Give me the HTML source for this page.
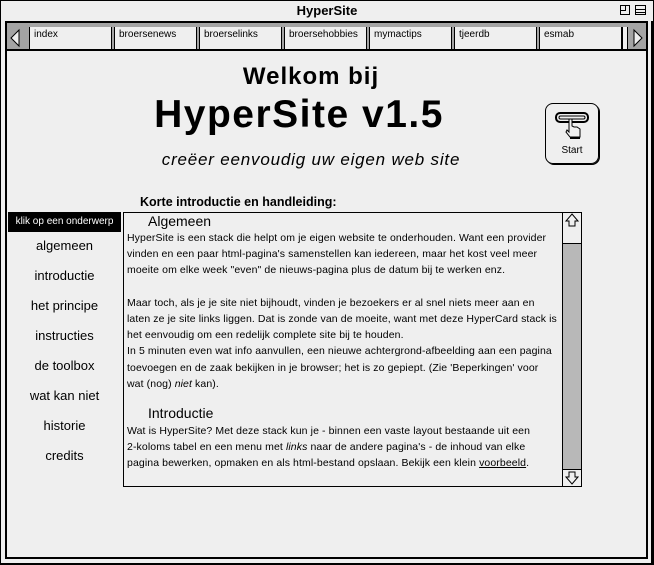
<!DOCTYPE html>
<html><head><meta charset="utf-8"><style>
*{margin:0;padding:0;box-sizing:border-box}
body{width:654px;height:565px;background:#efefef;position:relative;overflow:hidden;font-family:"Liberation Sans",sans-serif;color:#000}
.a{position:absolute}
.chk{background:#a4a4a4}
.tab{position:absolute;top:27px;height:22px;background:#efefef;border-left:1px solid #000;border-right:1px solid #000;font-size:10px;padding:2px 0 0 4px}
.menu{position:absolute;left:8px;width:113px;text-align:center;font-size:13px}
.ln{white-space:nowrap;font-size:10.5px;height:16.2px;line-height:16px;letter-spacing:0.1px}
</style></head><body>
<div class="a" style="left:0;top:0;width:654px;height:565px;border:1px solid #000"></div>
<div class="a" style="left:0;top:3px;width:654px;text-align:center;font-weight:bold;font-size:13px">HyperSite</div>
<div class="a" style="left:620px;top:5px;width:10px;height:10px;border:1px solid #000"></div>
<div class="a" style="left:620px;top:5px;width:6px;height:6px;border-right:1px solid #000;border-bottom:1px solid #000"></div>
<div class="a" style="left:635px;top:5px;width:11px;height:10px;border:1px solid #000;background:linear-gradient(#000,#000) 0 3px/100% 1px no-repeat,linear-gradient(#000,#000) 0 6px/100% 1px no-repeat"></div>
<div class="a" style="left:5px;top:21px;width:643px;height:538px;border:2px solid #000"></div>
<div class="a" style="left:651px;top:21px;width:2px;height:543px;background:#000"></div>
<div class="a" style="left:0;top:563px;width:654px;height:2px;background:#000"></div>
<div class="a chk" style="left:7px;top:23px;width:639px;height:26px"></div>
<div class="a" style="left:7px;top:49px;width:639px;height:2px;background:#000"></div>
<svg class="a" style="left:9px;top:28px" width="12" height="20"><path d="M10 2 L2 10 L10 18 Z" fill="#efefef" stroke="#000"/></svg>
<svg class="a" style="left:632px;top:28px" width="12" height="20"><path d="M2 2 L10 10 L2 18 Z" fill="#efefef" stroke="#000"/></svg>
<div class="tab" style="left:29px;width:83px">index</div>
<div class="tab" style="left:114px;width:83px">broersenews</div>
<div class="tab" style="left:199px;width:83px">broerselinks</div>
<div class="tab" style="left:284px;width:83px">broersehobbies</div>
<div class="tab" style="left:369px;width:83px">mymactips</div>
<div class="tab" style="left:454px;width:83px">tjeerdb</div>
<div class="tab" style="left:539px;width:83px">esmab</div>
<div class="tab" style="left:622px;width:6px;padding:0"></div>
<div class="a" style="left:0;top:63px;width:622px;text-align:center;font-weight:bold;font-size:24px;letter-spacing:1px">Welkom bij</div>
<div class="a" style="left:0;top:93px;width:598px;text-align:center;font-weight:bold;font-size:39px;letter-spacing:1.5px">HyperSite v1.5</div>
<div class="a" style="left:0;top:150px;width:622px;text-align:center;font-style:italic;font-size:17px;letter-spacing:0.8px">creëer eenvoudig uw eigen web site</div>
<div class="a" style="left:140px;top:195px;font-weight:bold;font-size:12.5px">Korte introductie en handleiding:</div>
<div class="a" style="left:545px;top:103px;width:54px;height:61px;border:1px solid #000;border-radius:8px;box-shadow:1px 1px 0 #000"></div>
<svg class="a" style="left:553px;top:110px" width="40" height="30"><rect x="3" y="3" width="32" height="9" rx="4" fill="none" stroke="#000" stroke-width="2"/><rect x="6" y="6" width="26" height="3" rx="1.5" fill="none" stroke="#000"/><path d="M16 9 V22 L14 20 L13 22 L17 27 H27 V19 L24 17 L21 17 L19 16 V9 Z" fill="#efefef" stroke="#000"/><rect x="17" y="27" width="10" height="2" fill="#000"/></svg>
<div class="a" style="left:545px;top:145px;width:54px;text-align:center;font-size:10px">Start</div>
<div class="a" style="left:8px;top:212px;width:113px;height:20px;background:#000;color:#fff;font-size:10px;text-align:center;line-height:20px">klik op een onderwerp</div>
<div class="menu" style="top:238px">algemeen</div>
<div class="menu" style="top:268px">introductie</div>
<div class="menu" style="top:298px">het principe</div>
<div class="menu" style="top:328px">instructies</div>
<div class="menu" style="top:358px">de toolbox</div>
<div class="menu" style="top:388px">wat kan niet</div>
<div class="menu" style="top:418px">historie</div>
<div class="menu" style="top:448px">credits</div>
<div class="a" style="left:123px;top:212px;width:459px;height:275px;border:1px solid #000;overflow:hidden">
<div style="position:absolute;left:3px;top:0;width:436px">
<div style="font-size:14px;height:17px;line-height:16px;padding-left:21px">Algemeen</div>
<div class="ln">HyperSite is een stack die helpt om je eigen website te onderhouden. Want een provider</div>
<div class="ln">vinden en een paar html-pagina's samenstellen kan iedereen, maar het kost veel meer</div>
<div class="ln">moeite om elke week "even" de nieuws-pagina plus de datum bij te werken enz.</div>
<div class="ln"></div>
<div class="ln">Maar toch, als je je site niet bijhoudt, vinden je bezoekers er al snel niets meer aan en</div>
<div class="ln">laten ze je site links liggen. Dat is zonde van de moeite, want met deze HyperCard stack is</div>
<div class="ln">het eenvoudig om een redelijk complete site bij te houden.</div>
<div class="ln">In 5 minuten even wat info aanvullen, een nieuwe achtergrond-afbeelding aan een pagina</div>
<div class="ln">toevoegen en de zaak bekijken in je browser; het is zo gepiept. (Zie 'Beperkingen' voor</div>
<div class="ln">wat (nog) <i>niet</i> kan).</div>
<div style="height:12px"></div>
<div style="font-size:14px;height:19px;line-height:18px;padding-left:21px">Introductie</div>
<div class="ln">Wat is HyperSite? Met deze stack kun je - binnen een vaste layout bestaande uit een</div>
<div class="ln">2-koloms tabel en een menu met <i>links</i> naar de andere pagina's - de inhoud van elke</div>
<div class="ln">pagina bewerken, opmaken en als html-bestand opslaan. Bekijk een klein <u>voorbeeld</u>.</div>
</div>
<div style="position:absolute;left:438px;top:-1px;width:19px;height:275px;border-left:1px solid #000">
<div style="position:absolute;left:0;top:16px;width:18px;height:242px;background:#b8b8b8"></div>
<div style="position:absolute;left:0;top:0;width:18px;height:17px;background:#efefef;border-bottom:1px solid #000"><svg width="18" height="16"><path d="M9 2 L15 9 H12 V14 H6 V9 H3 Z" fill="none" stroke="#000"/></svg></div>
<div style="position:absolute;left:0;top:16px;width:18px;height:16px;background:#efefef;border-bottom:1px solid #000"></div>
<div style="position:absolute;left:0;top:257px;width:18px;height:17px;background:#efefef;border-top:1px solid #000"><svg width="18" height="16"><path d="M9 14 L15 7 H12 V2 H6 V7 H3 Z" fill="none" stroke="#000"/></svg></div>
</div>
</div>
</body></html>
